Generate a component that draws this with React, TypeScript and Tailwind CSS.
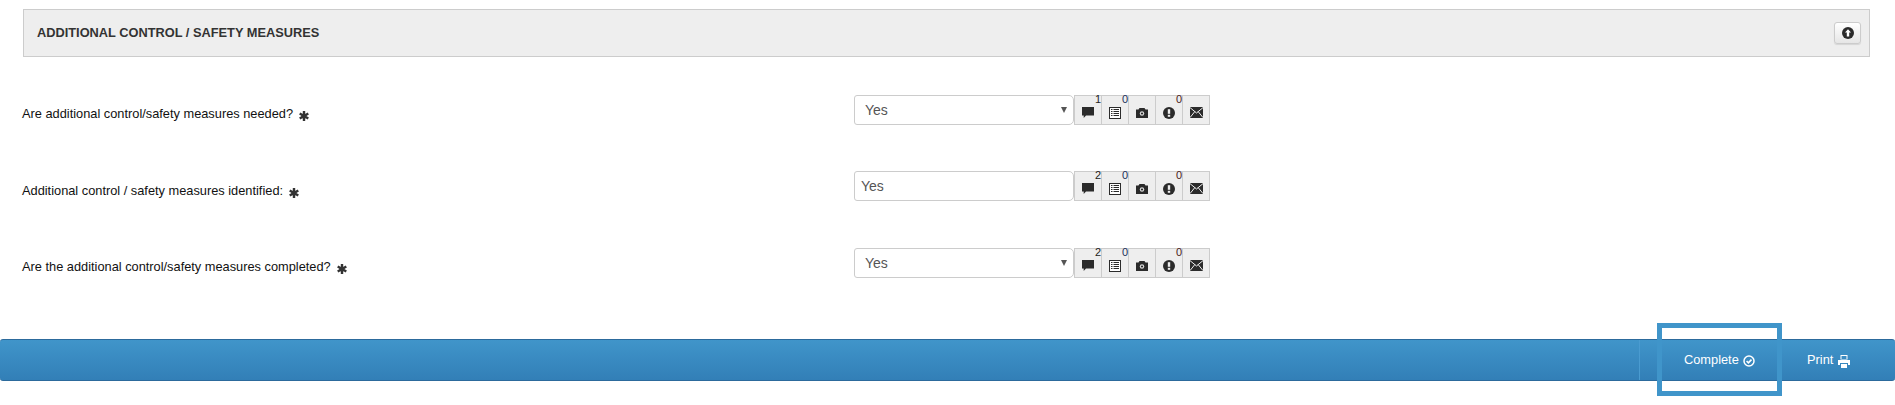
import React from "react";

const font = { fontFamily: '"Liberation Sans", Arial, sans-serif' };

const CommentIcon = () => (
  <svg width="12" height="12" viewBox="0 0 12 12" fill="#2b2b2b">
    <path d="M0 0h12v8.5H4L1.7 11V8.5H0z" />
  </svg>
);

const ListIcon = () => (
  <svg width="12" height="12" viewBox="0 0 12 12">
    <rect x="0.5" y="0.5" width="11" height="11" fill="#fff" stroke="#2b2b2b" />
    <path d="M2 2.5h1.5M2 4.5h1.5M2 6.5h1.5M2 8.5h1.5M4.5 2.5H10M4.5 4.5H10M4.5 6.5H10M4.5 8.5H10" stroke="#2b2b2b" strokeWidth="1.1" />
  </svg>
);

const CameraIcon = () => (
  <svg width="12" height="10" viewBox="0 0 12 10">
    <path d="M0 1.5h2.5L3.5 0h5l1 1.5H12V10H0z" fill="#2b2b2b" />
    <circle cx="6" cy="5.5" r="2.2" fill="#ddd" />
    <circle cx="6" cy="5.5" r="1.1" fill="#2b2b2b" />
  </svg>
);

const ExclamationIcon = () => (
  <svg width="12" height="12" viewBox="0 0 12 12">
    <circle cx="6" cy="6" r="6" fill="#2b2b2b" />
    <rect x="4.8" y="2.2" width="2.4" height="4.6" fill="#eee" />
    <rect x="4.8" y="7.8" width="2.4" height="2" fill="#eee" />
  </svg>
);

const EnvelopeIcon = () => (
  <svg width="13" height="11" viewBox="0 0 13 11">
    <rect width="13" height="11" fill="#2b2b2b" />
    <path d="M0 0.6L6.5 6L13 0.6M0 10.6L4.8 4.6M13 10.6L8.2 4.6" stroke="#eee" strokeWidth="1" fill="none" />
  </svg>
);

const RequiredIcon = () => (
  <svg width="10" height="10" viewBox="0 0 10 10" stroke="#333" strokeWidth="2.4" className="ml-[6px] mt-[5px]">
    <path d="M5 0v10M0.7 2.5l8.6 5M0.7 7.5l8.6-5" />
    <circle cx="5" cy="5" r="2.5" fill="#333" stroke="none" />
  </svg>
);

const Cell = ({ count, color, children }: { count?: string; color?: string; children: React.ReactNode }) => (
  <div className="relative flex h-full w-[27px] items-center justify-center border-r border-[#ccc] pr-[1px] pt-[5px]">
    {children}
    {count && (
      <span className={`absolute right-0 top-[-3px] text-[11px] leading-[13px] ${color}`}>{count}</span>
    )}
  </div>
);

const Addons = ({ comments }: { comments: string }) => (
  <div className="flex h-full border border-[#ccc] bg-[#eeeeee]">
    <Cell count={comments} color="text-[#222]"><CommentIcon /></Cell>
    <Cell count="0" color="text-[#1a2f5a]"><ListIcon /></Cell>
    <Cell><CameraIcon /></Cell>
    <Cell count="0" color="text-[#4a2020]"><ExclamationIcon /></Cell>
    <div className="flex w-[26px] items-center justify-center pt-[5px]"><EnvelopeIcon /></div>
  </div>
);

const Question = ({ label, comments, labelTop, children }: { label: string; comments: string; labelTop: string; children: React.ReactNode }) => (
  <div className="flex h-[30px] pl-[22px]">
    <div className={`flex w-[832px] items-start text-[12.8px] leading-[16px] text-[#111] ${labelTop}`}>
      {label}
      <RequiredIcon />
    </div>
    <div className="w-[220px]">{children}</div>
    <Addons comments={comments} />
  </div>
);

const SelectBox = () => (
  <div className="flex h-full items-center justify-between rounded-l-[3px] rounded-r-[5px] border border-[#ccc] bg-white pl-[10px] pr-[6px] text-[14px] text-[#555]">
    <span>Yes</span>
    <span className="h-0 w-0 border-x-[3px] border-t-[6px] border-x-transparent border-t-[#555]" />
  </div>
);

const InputBox = () => (
  <div className="flex h-full items-center rounded-l-[3px] rounded-r-[5px] border border-[#ccc] bg-white pl-[6px] text-[14px] text-[#555]">
    Yes
  </div>
);

export default function App() {
  return (
    <div className="h-[405px] w-[1895px] overflow-hidden bg-white" style={font}>
      <div className="ml-[23px] mr-[25px] mt-[9px] flex h-[48px] items-center justify-between border border-[#ccc] bg-[#eeeeee] pl-[13px] pr-[8px]">
        <h2 className="text-[12.8px] font-bold text-[#333]">ADDITIONAL CONTROL / SAFETY MEASURES</h2>
        <button className="flex h-[22px] w-[27px] items-center justify-center rounded-[3px] border border-[#ccc] bg-gradient-to-b from-white to-[#e6e6e6] shadow-[0_1px_1px_rgba(0,0,0,0.1)]">
          <svg width="12" height="12" viewBox="0 0 12 12">
            <circle cx="6" cy="6" r="6" fill="#2b2b2b" />
            <path d="M6 2.2L9 5.6H7.2V9.5H4.8V5.6H3z" fill="#fff" />
          </svg>
        </button>
      </div>

      <div className="mt-[38px]">
        <Question label="Are additional control/safety measures needed?" comments="1" labelTop="pt-[11px]">
          <SelectBox />
        </Question>
      </div>
      <div className="mt-[46px]">
        <Question label="Additional control / safety measures identified:" comments="2" labelTop="pt-[12px]">
          <InputBox />
        </Question>
      </div>
      <div className="mt-[47px]">
        <Question label="Are the additional control/safety measures completed?" comments="2" labelTop="pt-[11px]">
          <SelectBox />
        </Question>
      </div>

      <div className="mt-[61px] flex h-[42px] items-center justify-end rounded-[3px] border-y border-[#2c6a9c] bg-gradient-to-b from-[#4095ca] to-[#327fb7] text-[12.8px] text-white">
        <div className="relative flex h-full w-[143px] items-center border-l border-[#4a9bd0] pl-[44px]">
          <span>Complete</span>
          <svg width="12" height="12" viewBox="0 0 12 12" fill="none" className="ml-[4px] mt-[2px]">
            <circle cx="6" cy="6" r="5" stroke="#fff" strokeWidth="1.5" />
            <path d="M3.6 6l1.8 1.8L8.5 4.6" stroke="#fff" strokeWidth="1.6" />
          </svg>
          <div className="absolute left-[17px] top-[-17px] h-[73px] w-[125px] border-[5px] border-[#4095ca]" />
        </div>
        <div className="flex w-[113px] items-center pl-[25px]">
          <span>Print</span>
          <svg width="12" height="13" viewBox="0 0 12 13" className="ml-[5px] mt-[2px]" fill="#fff">
            <path fillRule="evenodd" d="M2.5 0h7v4.5h-7zM3.5 1v3h5V1z" />
            <path d="M0 5h12v5h-2V8H2v2H0z" />
            <path d="M3 9h6v4H3z" />
          </svg>
        </div>
      </div>
    </div>
  );
}
